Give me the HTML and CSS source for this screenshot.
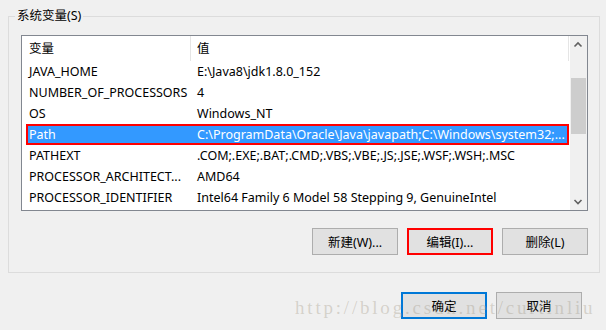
FILE: index.html
```html
<!DOCTYPE html>
<html lang="zh-CN">
<head>
    <meta charset="UTF-8">
    <title>环境变量</title>
    <link rel="stylesheet" href="styles.css">
</head>
<body>
    <div class="dialog">
        <fieldset class="group">
            <legend>系统变量(S)</legend>
            <div class="listbox">
                <div class="table">
                    <div class="head">
                        <span class="head-name">变量</span>
                        <span class="head-value">值</span>
                    </div>
                    <div class="row"><span class="name">JAVA_HOME</span><span class="value">E:\Java8\jdk1.8.0_152</span></div>
                    <div class="row"><span class="name">NUMBER_OF_PROCESSORS</span><span class="value">4</span></div>
                    <div class="row"><span class="name">OS</span><span class="value">Windows_NT</span></div>
                    <div class="row selected"><span class="name">Path</span><span class="value">C:\ProgramData\Oracle\Java\javapath;C:\Windows\system32;...</span></div>
                    <div class="row"><span class="name">PATHEXT</span><span class="value">.COM;.EXE;.BAT;.CMD;.VBS;.VBE;.JS;.JSE;.WSF;.WSH;.MSC</span></div>
                    <div class="row"><span class="name">PROCESSOR_ARCHITECT...</span><span class="value">AMD64</span></div>
                    <div class="row"><span class="name">PROCESSOR_IDENTIFIER</span><span class="value">Intel64 Family 6 Model 58 Stepping 9, GenuineIntel</span></div>
                </div>
                <div class="scrollbar">
                    <div class="sb-btn">
                        <svg width="17" height="17" viewBox="0 0 17 17"><path d="M4.5 10.5 L8 7 L11.5 10.5" fill="none" stroke="#606060" stroke-width="1.6"/></svg>
                    </div>
                    <div class="sb-track"><div class="sb-thumb"></div></div>
                    <div class="sb-btn">
                        <svg width="17" height="17" viewBox="0 0 17 17"><path d="M4.5 7 L8 10.5 L11.5 7" fill="none" stroke="#606060" stroke-width="1.6"/></svg>
                    </div>
                </div>
            </div>
            <div class="actions">
                <button class="btn">新建(W)...</button>
                <button class="btn btn-marked">编辑(I)...</button>
                <button class="btn">删除(L)</button>
            </div>
        </fieldset>
        <div class="footer">
            <button class="btn btn-default">确定</button>
            <button class="btn">取消</button>
        </div>
        <div class="watermark">http://blog.csdn.net/curtinliu</div>
    </div>
</body>
</html>
```

FILE: styles.css
```css
*{
    box-sizing: border-box;
}
body{
    margin: 0;
    background: #f0f0f0;
    font-family: "Noto Sans", "Noto Sans CJK SC", sans-serif;
    font-size: 12.5px;
    color: #000;
}
.dialog{
    position: relative;
    width: 606px;
    height: 330px;
    overflow: hidden;
}
.group{
    margin: 8px 0 0 8px;
    width: 592px;
    min-width: 0;
    padding: 11px 11px 17px 12px;
    border: 1px solid #dcdcdc;
}
.group legend{
    margin-left: -6px;
    padding: 0 2px;
    line-height: 16px;
}
.listbox{
    display: flex;
    width: 567px;
    height: 176px;
    border: 1px solid #828790;
    background: #fff;
}
.table{
    flex: 1;
    overflow: hidden;
}
.head{
    display: flex;
    height: 25px;
    align-items: center;
}
.head span{
    height: 25px;
    line-height: 25px;
    border-right: 1px solid #e5e5e5;
}
.head-name{
    width: 169px;
    padding-left: 7px;
}
.head-value{
    width: 378px;
    padding-left: 6px;
}
.row{
    display: flex;
    width: 543px;
    height: 21px;
    line-height: 21px;
    margin-left: 4px;
    white-space: nowrap;
}
.row .name{
    width: 164px;
    padding-left: 3px;
    overflow: hidden;
}
.row .value{
    flex: 1;
    padding-left: 7px;
    overflow: hidden;
}
.row.selected{
    background: #3399ff;
    color: #fff;
    box-shadow: inset 0 0 0 2px #ff0000;
}
.scrollbar{
    display: flex;
    flex-direction: column;
    width: 17px;
    background: #f0f0f0;
}
.sb-btn{
    height: 17px;
}
.sb-btn svg{
    display: block;
}
.sb-track{
    flex: 1;
    padding: 25px 1px 0 1px;
}
.sb-thumb{
    height: 56px;
    background: #cdcdcd;
}
.actions{
    display: flex;
    justify-content: flex-end;
    gap: 9px;
    margin-top: 17px;
}
.btn{
    width: 86px;
    height: 27px;
    padding: 0;
    border: 1px solid #adadad;
    background: #e1e1e1;
    font-family: "Noto Sans", "Noto Sans CJK SC", sans-serif;
    font-size: 12.5px;
    color: #000;
}
.btn-marked{
    border: 2px solid #ff0000;
}
.footer{
    display: flex;
    justify-content: flex-end;
    gap: 9px;
    margin-top: 19px;
    padding-right: 24px;
}
.btn-default{
    border: 2px solid #0078d7;
}
.watermark{
    position: absolute;
    left: 295px;
    top: 297px;
    font-family: "Liberation Serif", serif;
    font-size: 19px;
    letter-spacing: 2.8px;
    white-space: nowrap;
    color: rgba(160, 150, 130, 0.35);
    pointer-events: none;
}
```
